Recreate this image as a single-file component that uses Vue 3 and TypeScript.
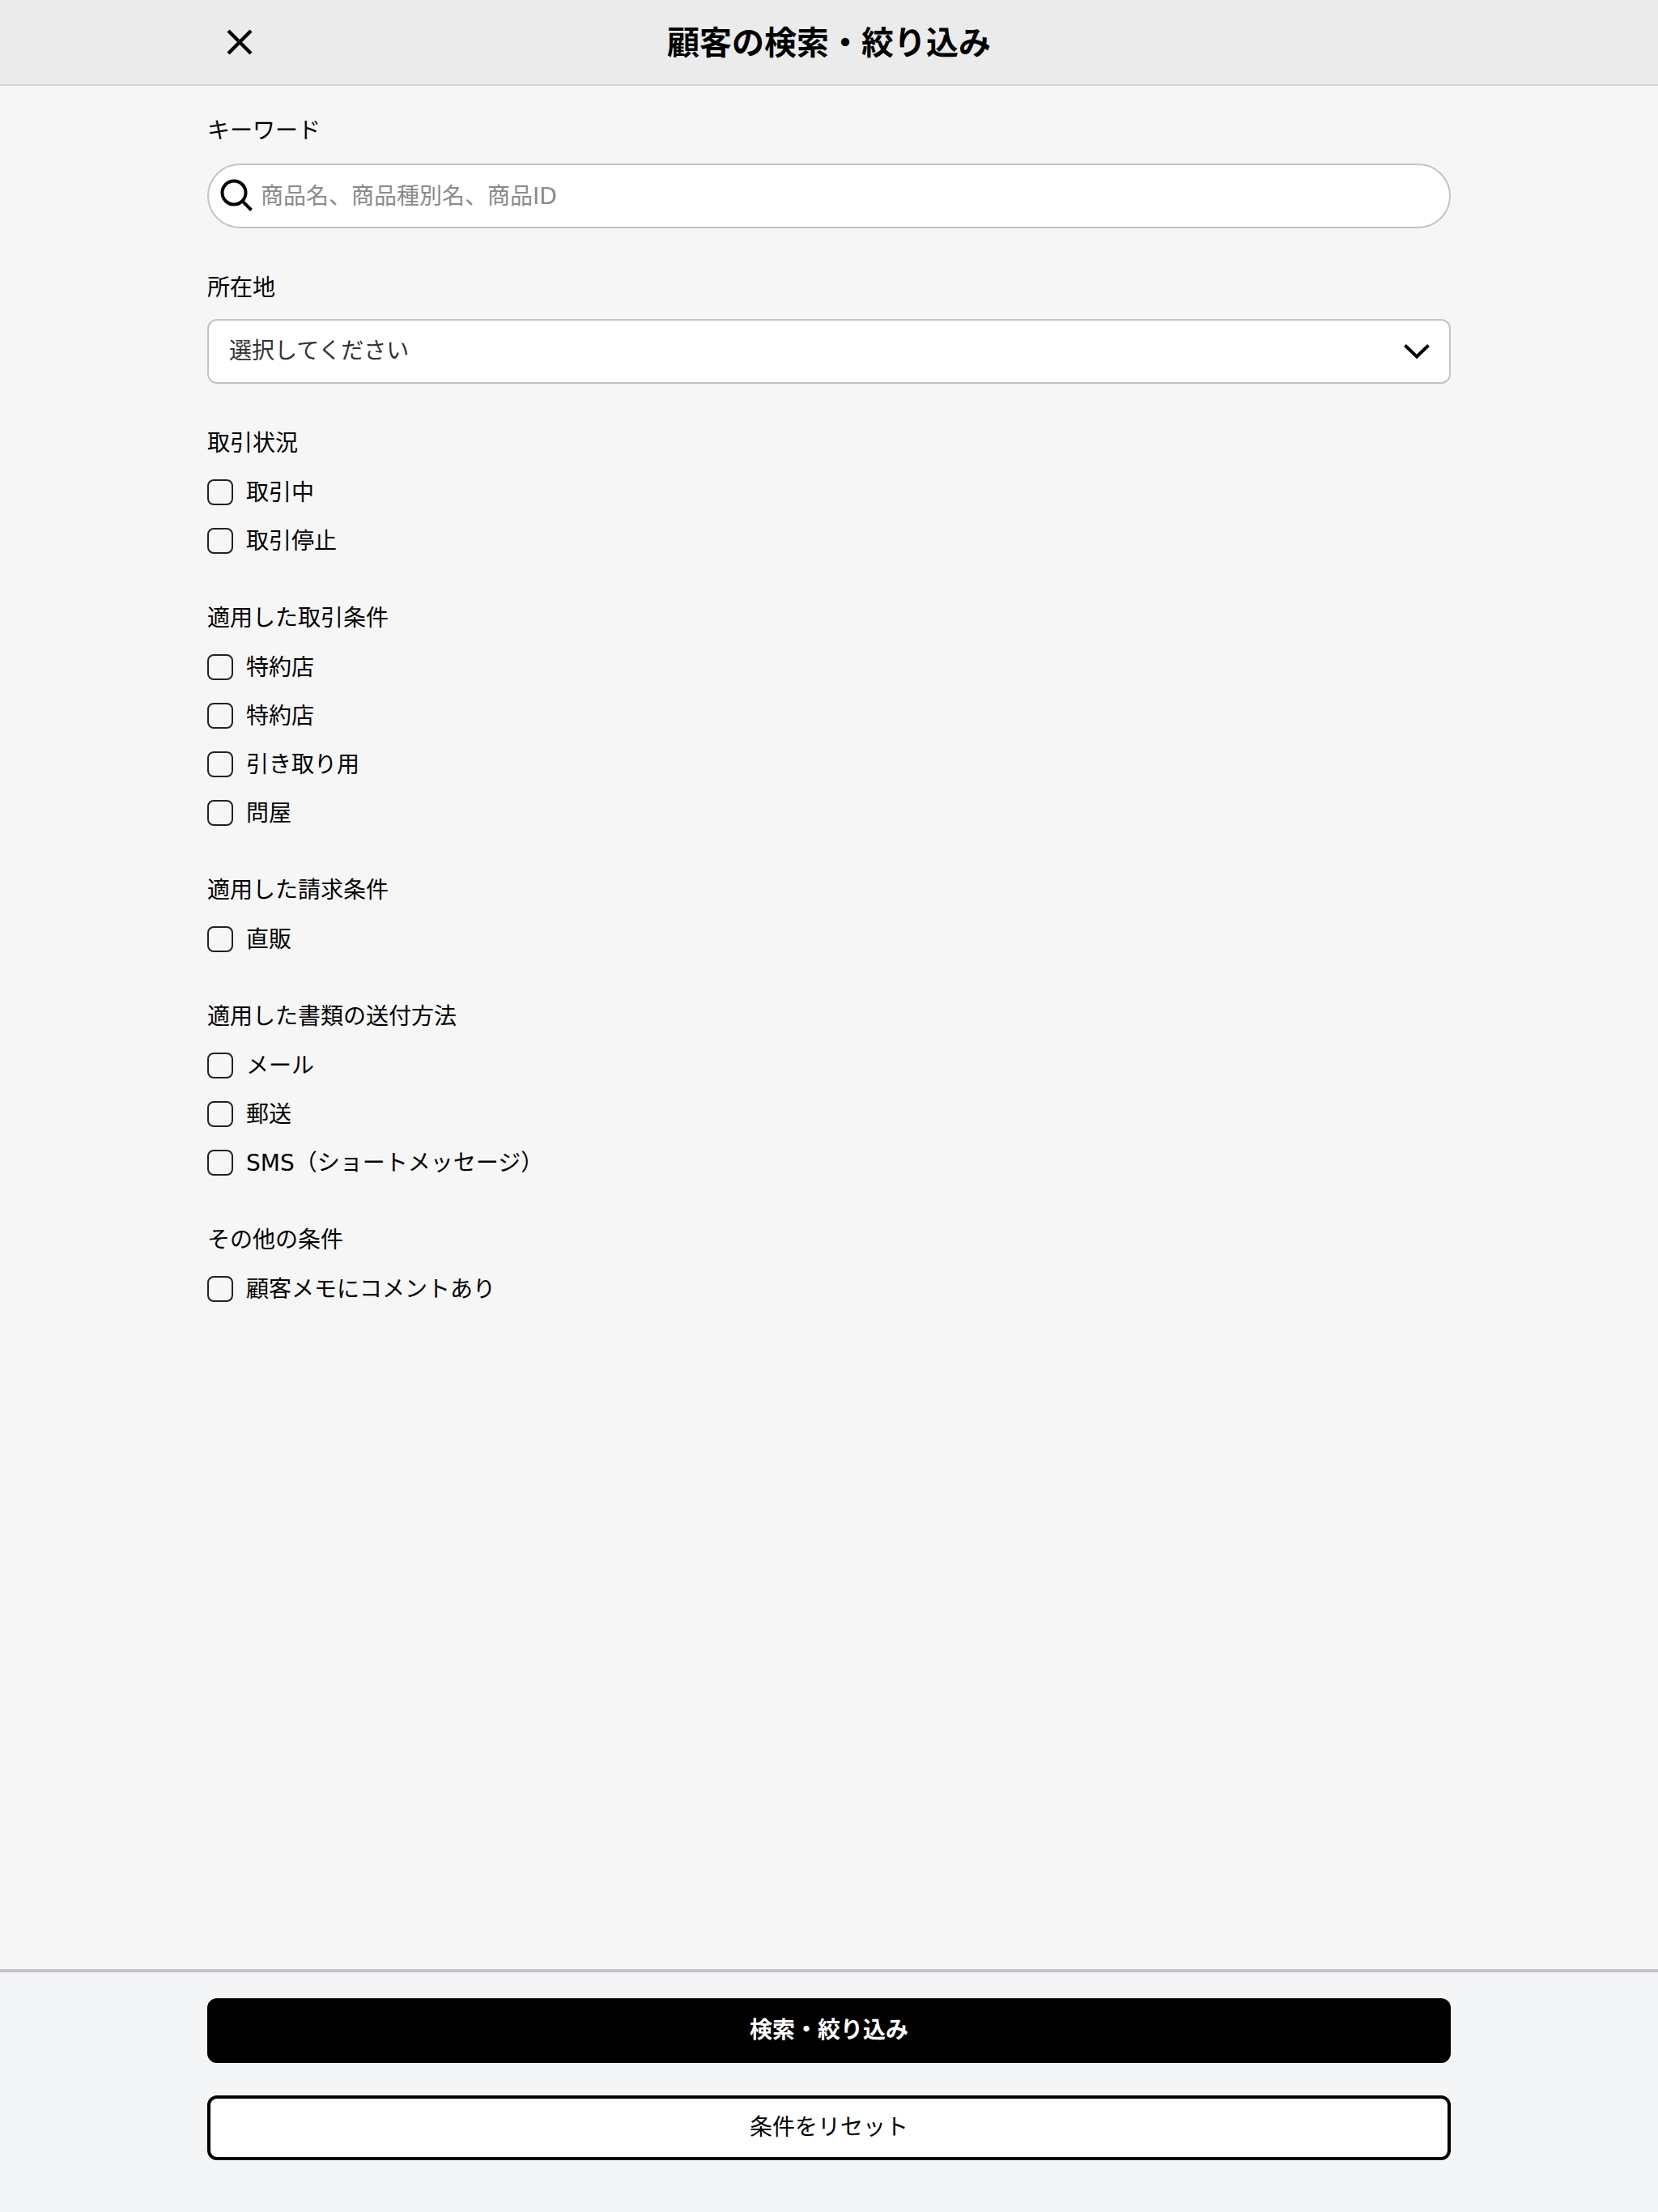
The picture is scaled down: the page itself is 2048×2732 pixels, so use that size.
<script setup lang="ts">
interface CheckGroup {
  title: string
  options: string[]
}

const groups: CheckGroup[] = [
  { title: '取引状況', options: ['取引中', '取引停止'] },
  { title: '適用した取引条件', options: ['特約店', '特約店', '引き取り用', '問屋'] },
  { title: '適用した請求条件', options: ['直販'] },
  { title: '適用した書類の送付方法', options: ['メール', '郵送', 'SMS（ショートメッセージ）'] },
  { title: 'その他の条件', options: ['顧客メモにコメントあり'] },
]
</script>

<template>
  <div class="page">
    <header class="header">
      <button class="close" type="button" aria-label="閉じる">
        <svg width="34" height="34" viewBox="0 0 34 34" fill="none" stroke="#000" stroke-width="4.4">
          <path d="M3 3 L31 31 M31 3 L3 31" />
        </svg>
      </button>
      <h1 class="title">顧客の検索・絞り込み</h1>
    </header>

    <main class="main">
      <section class="field">
        <div class="label">キーワード</div>
        <div class="control search">
          <svg class="search-icon" width="42" height="42" viewBox="0 0 42 42" fill="none" stroke="#000" stroke-width="4">
            <circle cx="17" cy="17" r="14.5" />
            <path d="M27.5 27.5 L38.5 38.5" />
          </svg>
          <span class="placeholder">商品名、商品種別名、商品ID</span>
        </div>
      </section>

      <section class="field">
        <div class="label">所在地</div>
        <div class="control select">
          <span class="select-text">選択してください</span>
          <svg width="34" height="20" viewBox="0 0 34 20" fill="none" stroke="#000" stroke-width="4">
            <path d="M2.5 2.5 L17 16.5 L31.5 2.5" />
          </svg>
        </div>
      </section>

      <section v-for="group in groups" :key="group.title" class="group">
        <div class="label">{{ group.title }}</div>
        <label v-for="(option, i) in group.options" :key="i" class="check-row">
          <span class="box"></span>
          <span class="check-text">{{ option }}</span>
        </label>
      </section>
    </main>

    <footer class="footer">
      <button class="btn primary" type="button">検索・絞り込み</button>
      <button class="btn secondary" type="button">条件をリセット</button>
    </footer>
  </div>
</template>

<style scoped>
.page {
  width: 2048px;
  min-height: 2732px;
  display: flex;
  flex-direction: column;
  background: #f6f6f6;
  color: #000;
  font-family: "DejaVu Sans", "Noto Sans CJK JP", sans-serif;
  font-size: 28px;
}
.header {
  height: 106px;
  box-sizing: border-box;
  border-bottom: 2px solid #d4d4d4;
  background: #ebebeb;
  padding: 0 256px;
  display: grid;
  grid-template-columns: 1fr auto 1fr;
  align-items: center;
}
.close {
  width: 80px;
  height: 80px;
  padding: 0;
  border: 0;
  background: none;
  display: flex;
  align-items: center;
  justify-content: center;
}
.title {
  margin: 0;
  padding-top: 2px;
  font-size: 40px;
  font-weight: 700;
  line-height: 56px;
}
.main {
  flex: 1;
  padding: 34px 256px 0;
}
.label {
  font-size: 28px;
  line-height: 40px;
  padding-top: 2px;
}
.field {
  margin-bottom: 52px;
}
.field .label {
  margin-bottom: 20px;
}
.field + .field .label {
  margin-bottom: 18px;
}
.control {
  height: 80px;
  box-sizing: border-box;
  background: #fff;
  border: 2px solid #c4c4c4;
  display: flex;
  align-items: center;
}
.search {
  border-radius: 40px;
  padding-left: 14px;
  gap: 8px;
}
.placeholder {
  color: #8a8a8a;
  padding-bottom: 4px;
}
.select {
  border-radius: 12px;
  padding: 0 23px 0 25px;
  justify-content: space-between;
}
.select-text {
  color: #333;
  padding-bottom: 6px;
}
.group {
  margin-bottom: 44px;
}
.group .label {
  margin-bottom: 10px;
}
.check-row {
  height: 60px;
  display: flex;
  align-items: center;
  gap: 16px;
}
.check-text {
  padding-bottom: 4px;
}
.box {
  width: 32px;
  height: 32px;
  box-sizing: border-box;
  border: 2px solid #222;
  border-radius: 8px;
}
.footer {
  border-top: 4px solid #c4c5c8;
  background: #f4f5f7;
  padding: 32px 256px 64px;
  display: flex;
  flex-direction: column;
  gap: 40px;
}
.btn {
  height: 80px;
  box-sizing: border-box;
  border-radius: 12px;
  font-family: inherit;
  font-size: 28px;
  padding: 0 0 6px;
}
.primary {
  background: #000;
  border: 0;
  color: #fff;
  font-weight: 700;
}
.secondary {
  background: #fff;
  border: 4px solid #000;
  color: #000;
  font-weight: 400;
}
</style>
